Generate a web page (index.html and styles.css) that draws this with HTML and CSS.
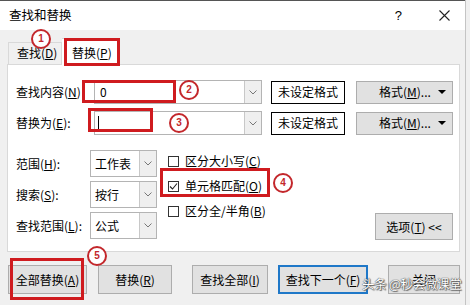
FILE: index.html
```html
<!DOCTYPE html>
<html lang="zh">
<head>
<meta charset="utf-8">
<link rel="stylesheet" href="styles.css">
</head>
<body>
<div class="window">
  <div class="titlebar">
    <span class="title">查找和替换</span>
    <div class="ctrls">
      <span class="help">?</span>
      <svg class="close" width="11" height="11" viewBox="0 0 11 11"><path d="M0.5 0.5L10.5 10.5M10.5 0.5L0.5 10.5" stroke="#222" stroke-width="1.1" fill="none"/></svg>
    </div>
  </div>
  <div class="tabs">
    <div class="tab">查找(<u>D</u>)</div>
    <div class="tab active">替换(<u>P</u>)</div>
  </div>
  <div class="panel">
    <div class="row">
      <span class="lbl">查找内容(<u>N</u>)</span>
      <div class="combo wide"><span class="val">0</span><span class="drop"><svg width="8" height="5" viewBox="0 0 8 5"><path d="M0.5 0.5L4 4L7.5 0.5" stroke="#777" fill="none"/></svg></span></div>
      <div class="fmtbox">未设定格式</div>
      <div class="btn fmt"><span>格式(<u>M</u>)...</span><svg class="tri" width="8" height="4" viewBox="0 0 8 4"><path d="M0 0H8L4 4Z" fill="#000"/></svg></div>
    </div>
    <div class="row r2">
      <span class="lbl">替换为(<u>E</u>):</span>
      <div class="combo wide"><span class="val caret"></span><span class="drop"><svg width="8" height="5" viewBox="0 0 8 5"><path d="M0.5 0.5L4 4L7.5 0.5" stroke="#777" fill="none"/></svg></span></div>
      <div class="fmtbox">未设定格式</div>
      <div class="btn fmt"><span>格式(<u>M</u>)...</span><svg class="tri" width="8" height="4" viewBox="0 0 8 4"><path d="M0 0H8L4 4Z" fill="#000"/></svg></div>
    </div>
    <div class="opts">
      <div class="selcol">
        <div class="selrow"><span class="lbl2">范围(<u>H</u>):</span><div class="combo small"><span class="val">工作表</span><span class="drop"><svg width="8" height="5" viewBox="0 0 8 5"><path d="M0.5 0.5L4 4L7.5 0.5" stroke="#777" fill="none"/></svg></span></div></div>
        <div class="selrow"><span class="lbl2">搜索(<u>S</u>):</span><div class="combo small"><span class="val">按行</span><span class="drop"><svg width="8" height="5" viewBox="0 0 8 5"><path d="M0.5 0.5L4 4L7.5 0.5" stroke="#777" fill="none"/></svg></span></div></div>
        <div class="selrow"><span class="lbl2">查找范围(<u>L</u>):</span><div class="combo small"><span class="val">公式</span><span class="drop"><svg width="8" height="5" viewBox="0 0 8 5"><path d="M0.5 0.5L4 4L7.5 0.5" stroke="#777" fill="none"/></svg></span></div></div>
      </div>
      <div class="chkcol">
        <div class="chk"><span class="box"></span>区分大小写(<u>C</u>)</div>
        <div class="chk"><span class="box"><svg width="9" height="9" viewBox="0 0 9 9"><path d="M1 4.5L3.5 7L8 1.5" stroke="#222" stroke-width="1.1" fill="none"/></svg></span>单元格匹配(<u>O</u>)</div>
        <div class="chk"><span class="box"></span>区分全/半角(<u>B</u>)</div>
      </div>
      <div class="btn optbtn">选项(<u>T</u>) &lt;&lt;</div>
    </div>
  </div>
  <div class="footer">
    <div class="btn fb b1">全部替换(<u>A</u>)</div>
    <div class="btn fb b2">替换(<u>R</u>)</div>
    <div class="btn fb b3">查找全部(<u>I</u>)</div>
    <div class="btn fb b4 focus">查找下一个(<u>F</u>)</div>
    <div class="btn fb b5">关闭</div>
  </div>

  <div class="mark m1"></div>
  <div class="mark m2"></div>
  <div class="mark m3"></div>
  <div class="mark m4"></div>
  <div class="mark m5"></div>
  <div class="num n1">1</div>
  <div class="num n2">2</div>
  <div class="num n3">3</div>
  <div class="num n4">4</div>
  <div class="num n5">5</div>
  <div class="wm">头条 @秒会微课堂</div>
</div>
</body>
</html>
```
FILE: styles.css
```css
* { box-sizing: border-box; }
html, body { margin: 0; padding: 0; }
body {
  width: 470px; height: 305px; overflow: hidden;
  background: #f0f0f0;
  font-family: "Noto Sans CJK SC", "Noto Sans", sans-serif;
  font-size: 12px; color: #000;
}
u { text-decoration: underline; text-underline-offset: 1px; }
.window { position: relative; height: 305px; display: flex; flex-direction: column; border-right: 1px solid #c4c4c4; width: 466px; }
.titlebar {
  height: 30px; background: #fff; border-top: 1px solid #555;
  display: flex; align-items: center; justify-content: space-between;
  padding-left: 9px; padding-right: 15px;
}
.title { font-size: 12.5px; line-height: 1; }
.ctrls { display: flex; align-items: center; gap: 37px; }
.help { font-family: "Liberation Sans", sans-serif; font-size: 13px; }
.tabs { height: 34px; display: flex; align-items: flex-end; padding-left: 8px; }
.tab {
  height: 22px; line-height: 20px; padding: 0 8px;
  border: 1px solid #d9d9d9; border-bottom: none; background: #f0f0f0;
}
.tab:first-child { width: 54px; padding: 0 0 0 8px; }
.tab.active {
  height: 27px; width: 57px; line-height: 27px; background: #fff; margin-bottom: -1px;
  position: relative; z-index: 2; padding: 0 0 0 10px; border-left: none;
}
.panel {
  margin-left: 7px; width: 453px; height: 188px; background: #fff;
  border: 1px solid #d9d9d9; padding: 15px 6px 0 8px;
  display: flex; flex-direction: column;
}
.row { display: flex; align-items: center; height: 24px; }
.row.r2 { margin-top: 7px; }
.lbl { width: 78px; line-height: 1; }
.combo {
  display: flex; height: 24px; border: 1px solid #b4b4b4; background: #fff;
}
.combo.wide { width: 168px; }
.combo .val { flex: 1; padding-left: 5px; line-height: 22px; }
.combo .caret { position: relative; }
.combo .caret::after { content: ""; position: absolute; left: 3px; top: 4px; width: 1px; height: 14px; background: #000; }
.combo .drop {
  width: 17px; border-left: 1px solid #c8c8c8; background: #efefef;
  display: flex; align-items: center; justify-content: center;
}
.fmtbox {
  margin-left: 9px; width: 74px; height: 23px; border: 1px solid #000;
  display: flex; align-items: center; justify-content: center; line-height: 1;
}
.btn {
  background: #e1e1e1; border: 1px solid #adadad;
  display: flex; align-items: center; justify-content: center; line-height: 1;
}
.fmt { margin-left: 11px; width: 97px; height: 23px; justify-content: flex-start; padding-left: 22px; }
.fmt .tri { margin-left: auto; margin-right: 6px; }
.opts { display: flex; margin-top: 15px; }
.selcol { display: flex; flex-direction: column; gap: 4px; }
.selrow { display: flex; align-items: center; }
.lbl2 { width: 74px; line-height: 1; }
.combo.small { width: 67px; height: 27px; }
.combo.small .val { line-height: 25px; padding-left: 4px; }
.chkcol { margin-left: 11px; display: flex; flex-direction: column; gap: 3px; }
.chk { height: 22px; display: flex; align-items: center; line-height: 1; }
.box {
  width: 11px; height: 11px; border: 1px solid #333; margin-right: 6px;
  display: flex; align-items: center; justify-content: center;
}
.optbtn { margin-left: auto; align-self: flex-end; width: 78px; height: 27px; margin-bottom: -1px; }
.footer { display: flex; margin-top: 13px; padding-left: 8px; }
.fb { height: 29px; }
.b1 { width: 79px; }
.b2 { width: 74px; margin-left: 11px; }
.b3 { width: 76px; margin-left: 20px; }
.b4 { width: 90px; margin-left: 10px; }
.b5 { width: 72px; margin-left: 20px; }
.focus { border: 2px solid #1f78c8; }

.mark { position: absolute; border: 3px solid #cf1b1f; z-index: 5; }
.m1 { left: 64px; top: 38px; width: 56px; height: 28px; }
.m2 { left: 82px; top: 80px; width: 94px; height: 23px; }
.m3 { left: 88px; top: 108px; width: 65px; height: 24px; }
.m4 { left: 160px; top: 168px; width: 110px; height: 29px; }
.m5 { left: 10px; top: 258px; width: 74px; height: 42px; }
.num {
  position: absolute; z-index: 6; width: 20px; height: 20px; border-radius: 50%;
  border: 2px solid #c3272b; background: #fff; color: #c3272b;
  font-family: "Liberation Sans", sans-serif; font-weight: bold; font-size: 10px;
  display: flex; align-items: center; justify-content: center; line-height: 1;
}
.n1 { left: 31px; top: 29px; }
.n2 { left: 179px; top: 80px; }
.n3 { left: 169px; top: 113px; }
.n4 { left: 273px; top: 173px; }
.n5 { left: 87px; top: 246px; }
.wm {
  position: absolute; z-index: 7; left: 362px; top: 278px;
  font-size: 12.5px; line-height: 1; color: #fff; white-space: nowrap; letter-spacing: -0.3px;
  text-shadow: 0 0 1px #444, 0 0 1px #444, 1px 1px 1px #666;
}
```
